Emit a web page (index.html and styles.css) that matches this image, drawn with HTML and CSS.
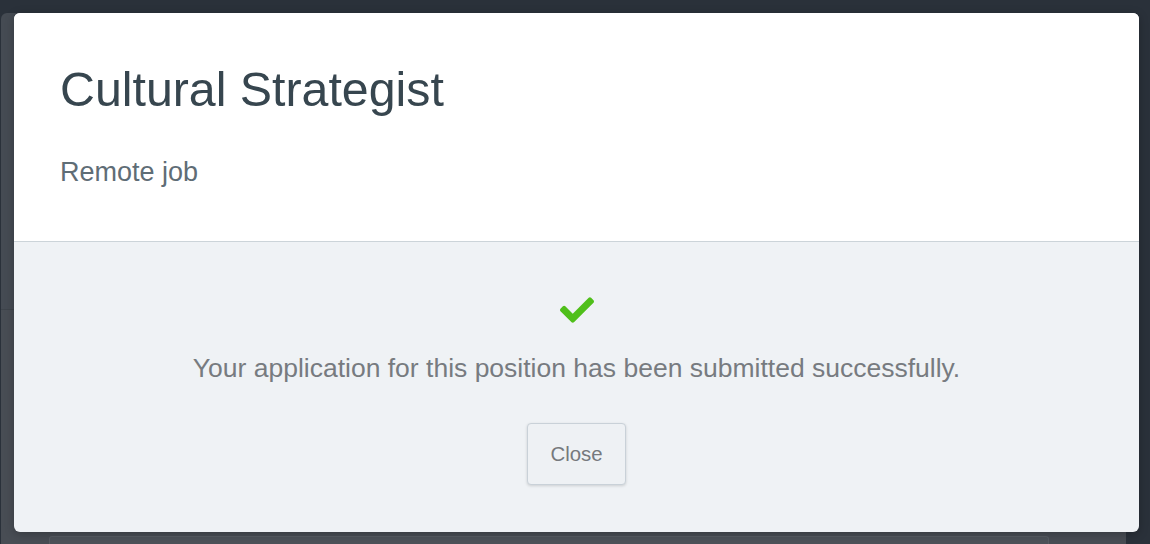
FILE: index.html
```html
<!DOCTYPE html>
<html lang="en">
<head>
<meta charset="utf-8">
<title>Cultural Strategist</title>
<link rel="stylesheet" href="styles.css">
</head>
<body>
  <div class="page">
    <div class="page-top"></div>
    <div class="page-bottom">
      <div class="page-card"></div>
    </div>
  </div>

  <div class="modal" role="dialog" aria-labelledby="job-title">
    <header class="modal-header">
      <h1 class="modal-title" id="job-title">Cultural Strategist</h1>
      <p class="modal-subtitle">Remote job</p>
    </header>
    <section class="modal-body">
      <svg class="check-icon" viewBox="0 65 512 382" width="34" height="26" aria-hidden="true">
        <path d="M173.898 439.404l-166.4-166.4c-9.997-9.997-9.997-26.206 0-36.204l36.203-36.204c9.997-9.998 26.207-9.998 36.204 0L192 312.69 432.095 72.596c9.997-9.997 26.207-9.997 36.204 0l36.203 36.204c9.997 9.997 9.997 26.206 0 36.204l-294.4 294.401c-9.998 9.997-26.207 9.997-36.204-.001z"/>
      </svg>
      <p class="modal-message">Your application for this position has been submitted successfully.</p>
      <button class="btn-close" type="button">Close</button>
    </section>
  </div>
</body>
</html>
```

FILE: styles.css
```css
* {
  box-sizing: border-box;
}

html, body {
  margin: 0;
  padding: 0;
  height: 100%;
  overflow: hidden;
}

body {
  background: #2a313a;
  font-family: "Liberation Sans", Arial, sans-serif;
  padding: 13px 0 0 1px;
}

.page {
  width: 1125px;
  height: 531px;
  background: #454b53;
  border-radius: 6px 6px 0 0;
  display: flex;
  flex-direction: column;
  overflow: hidden;
}

.page-top {
  height: 297px;
  flex: none;
  border-bottom: 1px solid #3e444b;
}

.page-bottom {
  flex: 1;
  padding: 226px 0 0 48px;
  background: #484d54;
}

.page-card {
  width: 1000px;
  height: 8px;
  border: 1px solid #575c63;
  border-bottom: 0;
  border-radius: 3px 3px 0 0;
  background: #4d5259;
}

.modal {
  position: absolute;
  left: 14px;
  top: 13px;
  width: 1125px;
  height: 519px;
  border-radius: 6px;
  overflow: hidden;
  background: #eff2f5;
  display: flex;
  flex-direction: column;
  box-shadow: 0 2px 10px rgba(0, 0, 0, 0.25);
}

.modal-header {
  background: #ffffff;
  padding: 49px 46px 0;
  height: 229px;
  flex: none;
  border-bottom: 1px solid #ccd4d9;
}

.modal-title {
  margin: 0;
  font-size: 48.3px;
  line-height: 54px;
  font-weight: 400;
  color: #37464f;
}

.modal-subtitle {
  margin: 40px 0 0;
  font-size: 27px;
  line-height: 32px;
  color: #5f6d76;
}

.modal-body {
  flex: 1;
  display: flex;
  flex-direction: column;
  align-items: center;
  padding-top: 55px;
}

.check-icon {
  display: block;
  fill: #4fbf1a;
}

.modal-message {
  margin: 30px 0 0;
  font-size: 26.5px;
  line-height: 31px;
  color: #777b80;
}

.btn-close {
  margin-top: 39px;
  font-family: "Liberation Sans", Arial, sans-serif;
  font-size: 20.4px;
  line-height: 24px;
  color: #76797d;
  background: #eef1f4;
  border: 1px solid #c9d1d8;
  border-radius: 4px;
  padding: 18px 22px;
  box-shadow: 0 1px 3px rgba(0, 0, 0, 0.15);
  cursor: pointer;
}
```
